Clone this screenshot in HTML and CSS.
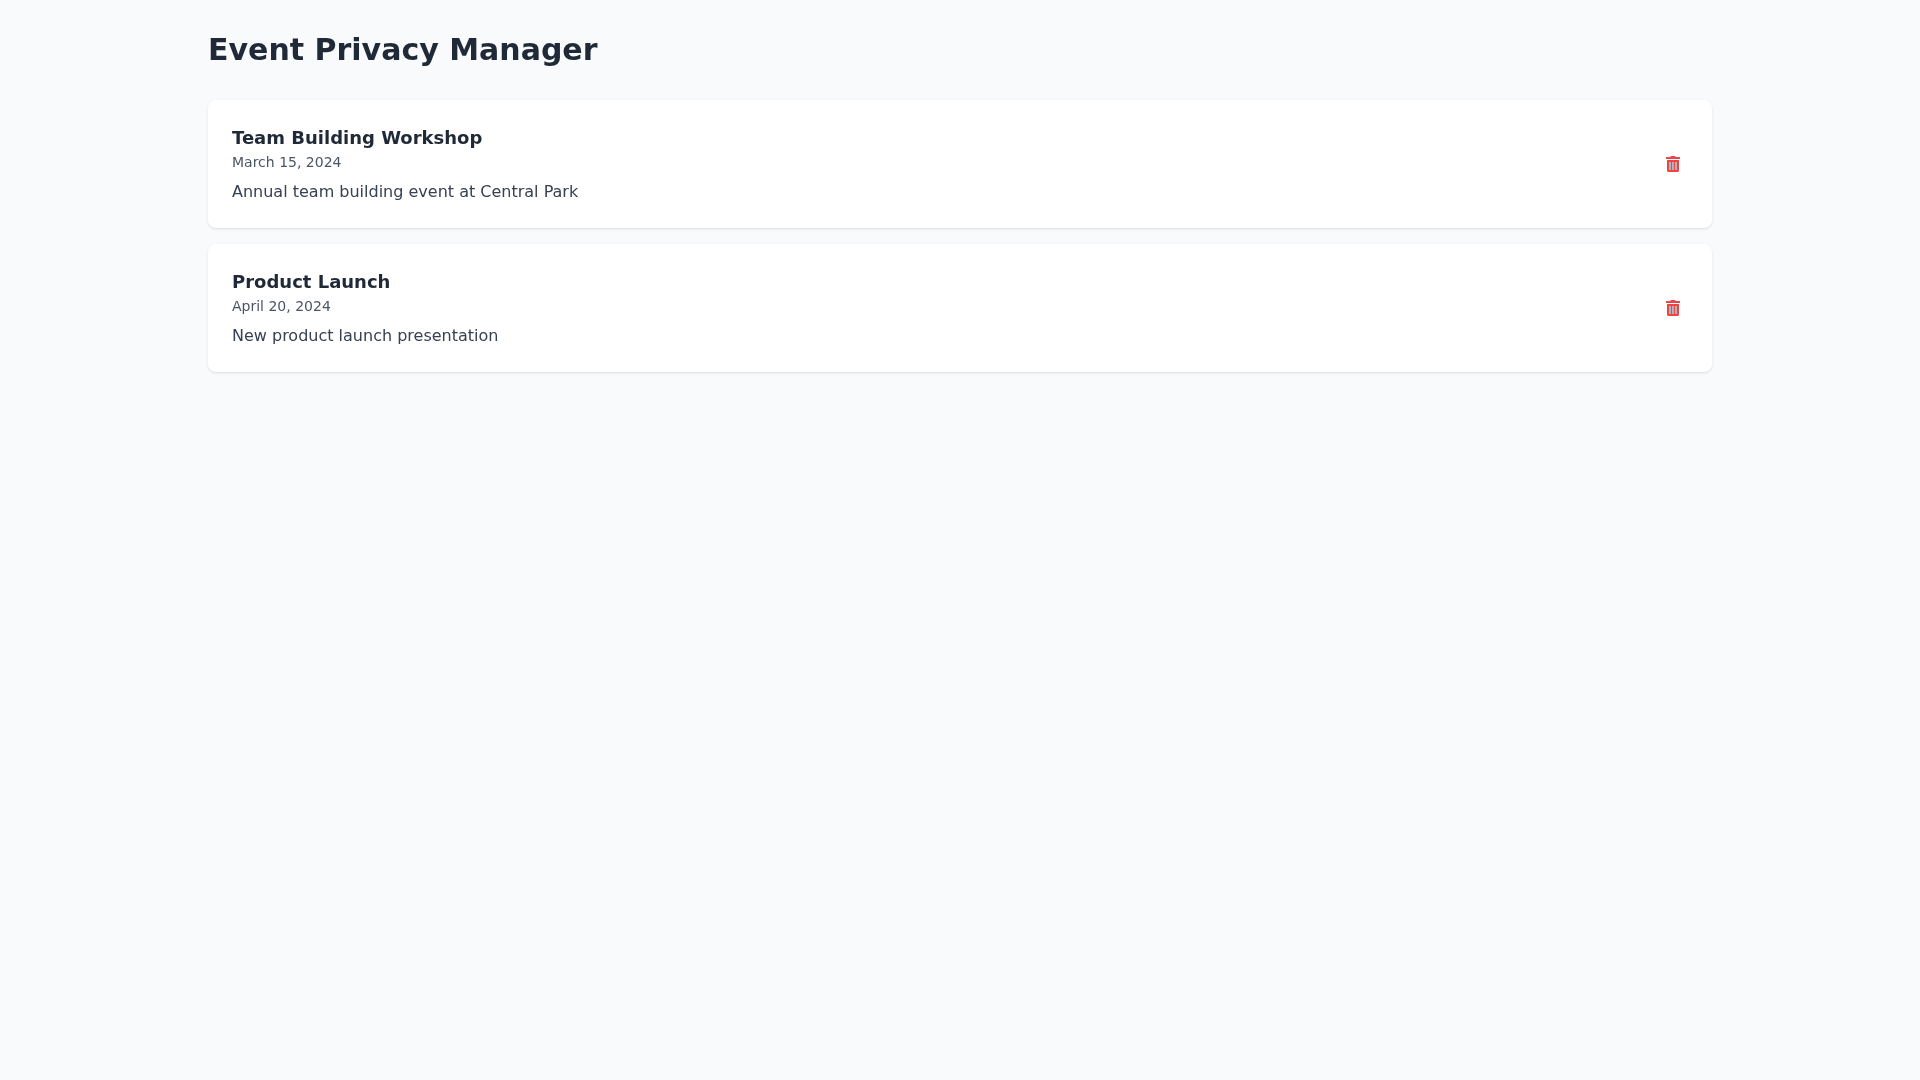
FILE: index.html
```html
<!DOCTYPE html>
<html lang="en">
<head>
    <meta charset="UTF-8">
    <meta name="viewport" content="width=device-width, initial-scale=1.0">
    <title>Event Privacy Manager</title>
    <link rel="stylesheet" href="styles.css">
</head>
<body>
    <div class="container">
        <h1>Event Privacy Manager</h1>

        <div class="event-list">
            <div class="event-card">
                <div class="event-info">
                    <h2>Team Building Workshop</h2>
                    <p class="event-date">March 15, 2024</p>
                    <p class="event-desc">Annual team building event at Central Park</p>
                </div>
                <button class="delete-btn" aria-label="Delete event">
                    <svg class="trash-icon" viewBox="0 0 448 512"><path d="M32 464a48 48 0 0 0 48 48h288a48 48 0 0 0 48-48V128H32zM432 32H312l-9.4-18.7A24 24 0 0 0 281.1 0H166.8a23.72 23.72 0 0 0-21.4 13.3L136 32H16A16 16 0 0 0 0 48v32a16 16 0 0 0 16 16h416a16 16 0 0 0 16-16V48a16 16 0 0 0-16-16z"/><rect class="trash-bar" x="96" y="192" width="64" height="256"/><rect class="trash-bar" x="192" y="192" width="64" height="256"/><rect class="trash-bar" x="288" y="192" width="64" height="256"/></svg>
                </button>
            </div>

            <div class="event-card">
                <div class="event-info">
                    <h2>Product Launch</h2>
                    <p class="event-date">April 20, 2024</p>
                    <p class="event-desc">New product launch presentation</p>
                </div>
                <button class="delete-btn" aria-label="Delete event">
                    <svg class="trash-icon" viewBox="0 0 448 512"><path d="M32 464a48 48 0 0 0 48 48h288a48 48 0 0 0 48-48V128H32zM432 32H312l-9.4-18.7A24 24 0 0 0 281.1 0H166.8a23.72 23.72 0 0 0-21.4 13.3L136 32H16A16 16 0 0 0 0 48v32a16 16 0 0 0 16 16h416a16 16 0 0 0 16-16V48a16 16 0 0 0-16-16z"/><rect class="trash-bar" x="96" y="192" width="64" height="256"/><rect class="trash-bar" x="192" y="192" width="64" height="256"/><rect class="trash-bar" x="288" y="192" width="64" height="256"/></svg>
                </button>
            </div>
        </div>
    </div>
</body>
</html>
```

FILE: styles.css
```css
* {
    margin: 0;
    padding: 0;
    box-sizing: border-box;
    font-family: 'DejaVu Sans', sans-serif;
}

body {
    background-color: #f9fafb;
    min-height: 100vh;
}

.container {
    max-width: 1536px;
    margin: 0 auto;
    padding: 32px 16px;
    will-change: opacity;
}

h1 {
    font-size: 30px;
    line-height: 36px;
    font-weight: bold;
    color: #1f2937;
    margin-bottom: 32px;
}

.event-list {
    display: flex;
    flex-direction: column;
    gap: 16px;
}

.event-card {
    background-color: white;
    border-radius: 8px;
    padding: 24px;
    display: flex;
    align-items: center;
    justify-content: space-between;
    box-shadow: 0 1px 3px 0 rgba(0, 0, 0, 0.1), 0 1px 2px -1px rgba(0, 0, 0, 0.1);
}

.event-info h2 {
    font-size: 18px;
    line-height: 28px;
    font-weight: bold;
    color: #1f2937;
}

.event-date {
    font-size: 14px;
    line-height: 20px;
    color: #4b5563;
}

.event-desc {
    font-size: 16px;
    line-height: 24px;
    color: #374151;
    margin-top: 8px;
}

.delete-btn {
    display: flex;
    padding: 8px;
    background: none;
    border: none;
    border-radius: 9999px;
    cursor: pointer;
}

.trash-icon {
    width: 14px;
    height: 16px;
    fill: #ef4444;
}

.trash-bar {
    fill: #b4b4b8;
}
```
